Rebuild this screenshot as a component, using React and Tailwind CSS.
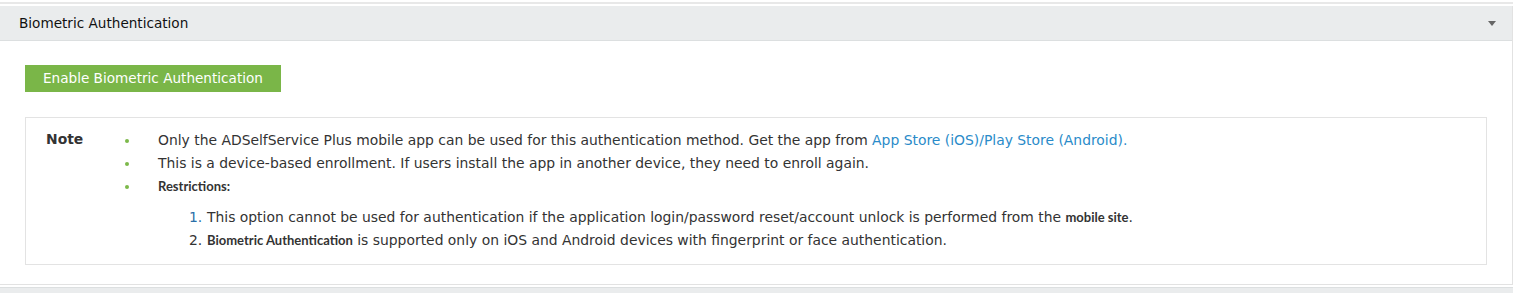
import React from "react";

const Bullet = ({ children }) => (
  <li className="flex items-start">
    <span className="mt-[10px] mr-[29px] block h-[4px] w-[4px] shrink-0 rounded-full bg-[#7cb94a]" />
    <span>{children}</span>
  </li>
);

const App = () => {
  return (
    <div className="h-[293px] w-[1525px] bg-white pt-[2px] text-[13.6px] text-[#222] font-['DejaVu_Sans',sans-serif]">
      <div className="w-[1513px] border-t-2 border-[#e8e8e8]" />
      <div className="mt-[2px] w-[1513px] border-r border-b border-[#e2e2e2]">
        <div className="flex h-[35px] items-center justify-between border-b border-[#dcdfe0] bg-[#eaeced] pl-[19px] pr-[16px]">
          <span className="text-[#111]">Biometric Authentication</span>
          <span className="block h-0 w-0 border-x-[4px] border-t-[5px] border-x-transparent border-t-[#666]" />
        </div>
        <div className="px-[25px] pt-[24px] pb-[19px]">
          <button className="h-[27px] bg-[#7ab648] px-[18px] text-white">
            Enable Biometric Authentication
          </button>
          <div className="mt-[25px] flex border border-[#e3e3e3] pt-[11px] pb-[12px] text-[13.9px]">
            <div className="w-[99px] shrink-0 pl-[20px] font-bold text-[#333]">Note</div>
            <ul className="leading-[23px] text-[#333]">
              <Bullet>
                Only the ADSelfService Plus mobile app can be used for this authentication method. Get the app from{" "}
                <a className="text-[#2a8bc9]">App Store (iOS)/Play Store (Android).</a>
              </Bullet>
              <Bullet>
                This is a device-based enrollment. If users install the app in another device, they need to enroll again.
              </Bullet>
              <Bullet>
                <span className="font-['Lato',sans-serif] font-bold text-[13px]">Restrictions:</span>
              </Bullet>
              <li>
                <ol className="mt-[8px] pl-[64px]">
                  <li className="flex">
                    <span className="w-[18px] text-[#2a6fa8]">1.</span>
                    <span>
                      This option cannot be used for authentication if the application login/password reset/account unlock is performed from the{" "}
                      <span className="font-['Lato',sans-serif] font-bold text-[13px]">mobile site</span>.
                    </span>
                  </li>
                  <li className="flex">
                    <span className="w-[18px]">2.</span>
                    <span>
                      <span className="font-['Lato',sans-serif] font-bold text-[13px]">Biometric Authentication</span> is supported only on iOS and Android devices with fingerprint or face authentication.
                    </span>
                  </li>
                </ol>
              </li>
            </ul>
          </div>
        </div>
      </div>
      <div className="mt-[2px] h-[10px] w-[1513px] border-t border-[#dcdfe0] bg-[#eaeced]" />
    </div>
  );
};

export default App;
